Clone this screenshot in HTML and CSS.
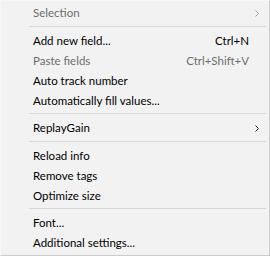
FILE: index.html
```html
<!DOCTYPE html>
<html lang="en">
<head>
    <meta charset="UTF-8">
    <title>Context menu</title>
    <link rel="stylesheet" href="styles.css">
</head>
<body>
    <div class="menu">
        <div class="menu-item disabled">
            <span class="label">Selection</span>
            <svg class="arrow" width="4" height="7" viewBox="0 0 4 7"><path d="M0.5 0.5 L3.5 3.5 L0.5 6.5" fill="none" stroke="currentColor" stroke-width="1"/></svg>
        </div>
        <div class="separator"></div>
        <div class="menu-item">
            <span class="label">Add new field...</span>
            <span class="shortcut">Ctrl+N</span>
        </div>
        <div class="menu-item disabled">
            <span class="label">Paste fields</span>
            <span class="shortcut">Ctrl+Shift+V</span>
        </div>
        <div class="menu-item">
            <span class="label">Auto track number</span>
        </div>
        <div class="menu-item">
            <span class="label">Automatically fill values...</span>
        </div>
        <div class="separator"></div>
        <div class="menu-item">
            <span class="label">ReplayGain</span>
            <svg class="arrow" width="4" height="7" viewBox="0 0 4 7"><path d="M0.5 0.5 L3.5 3.5 L0.5 6.5" fill="none" stroke="currentColor" stroke-width="1"/></svg>
        </div>
        <div class="separator"></div>
        <div class="menu-item">
            <span class="label">Reload info</span>
        </div>
        <div class="menu-item">
            <span class="label">Remove tags</span>
        </div>
        <div class="menu-item">
            <span class="label">Optimize size</span>
        </div>
        <div class="separator"></div>
        <div class="menu-item">
            <span class="label">Font...</span>
        </div>
        <div class="menu-item">
            <span class="label">Additional settings...</span>
        </div>
    </div>
</body>
</html>
```

FILE: styles.css
```css
* {
    margin: 0;
    padding: 0;
    box-sizing: border-box;
}

body {
    font-family: Lato, 'Noto Sans', sans-serif;
    font-size: 11.5px;
    color: #000;
    background: #f0f0f0;
}

.menu {
    width: 270px;
    height: 256px;
    background: #f2f2f2;
    border: 1px solid #cccccc;
    border-top-color: #f7f7f7;
    border-left-color: #f7f7f7;
    padding: 1.5px 3px 3px 2px;
}

.menu-item {
    display: flex;
    align-items: center;
    height: 20px;
    padding-left: 30px;
    padding-right: 17px;
    position: relative;
}

.menu-item .label {
    flex: 1;
    white-space: nowrap;
}

.shortcut {
    white-space: nowrap;
}

.arrow {
    position: absolute;
    right: 7px;
    top: 7px;
    color: #222;
}

.menu-item.disabled {
    color: #6d6d6d;
}

.menu-item.disabled .arrow {
    color: #a0a0a0;
}

.separator {
    height: 1px;
    background: #d7d7d7;
    margin: 3px 0 3.5px 26px;
}
```
